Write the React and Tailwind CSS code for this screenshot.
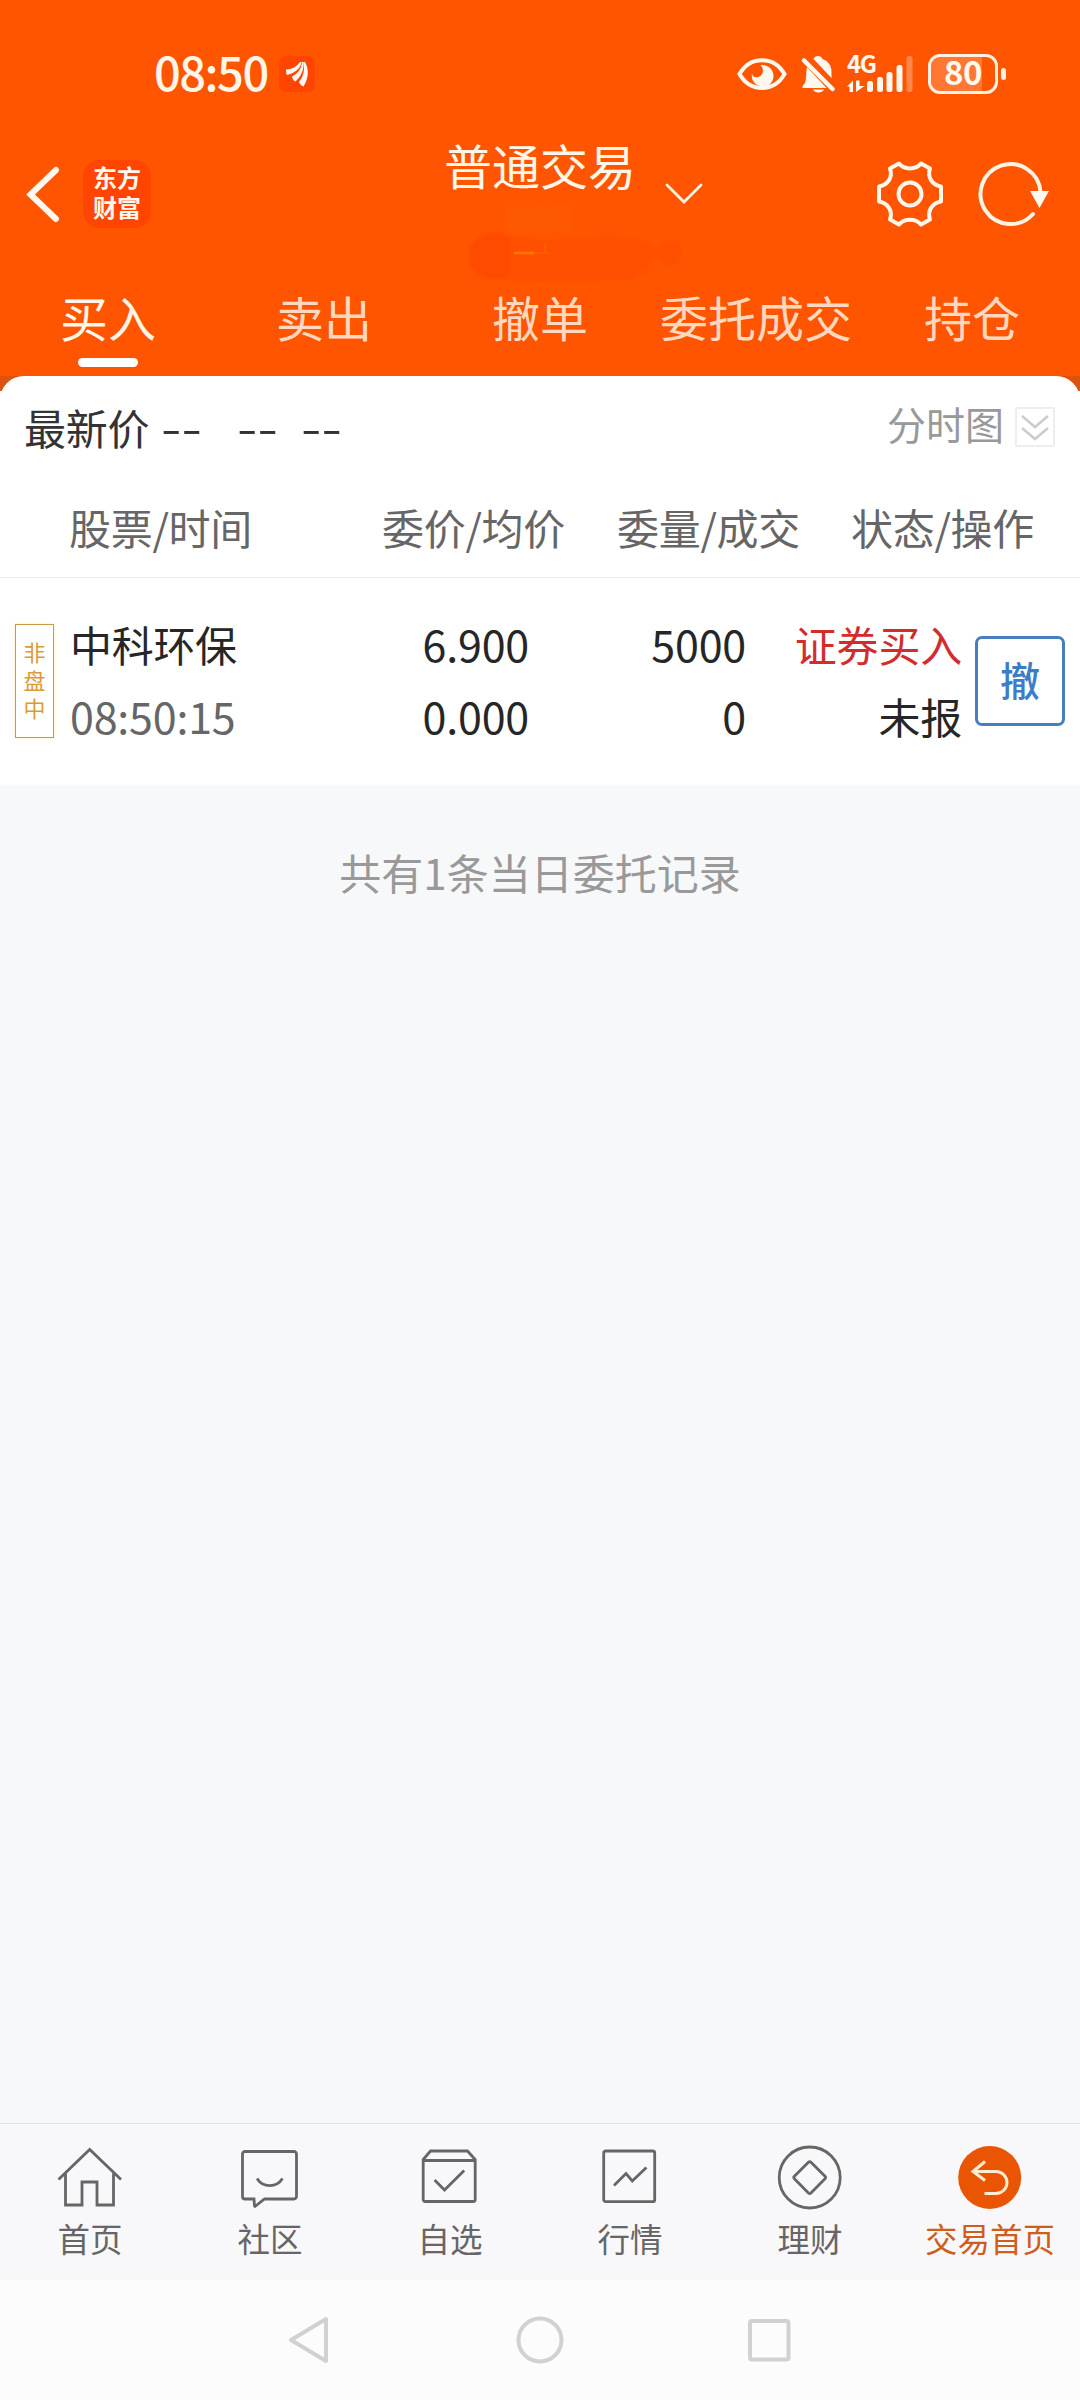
const tabs = ['买入', '卖出', '撤单', '委托成交', '持仓'];

function AppBadge() {
  return (
    <svg className="w-9 h-9 ml-[13px]" viewBox="0 0 36 36">
      <rect width="36" height="36" rx="7" fill="#ff4500" />
      <g fill="#fffaf2">
        <path d="M7 13.500c6 0 11-3 14-7.500h1.500c-1 7-7.500 11.500-14.500 13-.8-1-1-3.500-1-5.500z" />
        <path d="M13 20.500c6-3 9.500-8 10-14.500h1.500c1 8-3.500 15.500-8 19.500-2-.5-3-3-3.500-5z" />
        <path d="M20 26c4.500-6 6-12 4.500-20h1.500c4 7 4 16-1.500 24.500-2-.7-3.800-2.500-4.500-4.500z" />
      </g>
    </svg>
  );
}

function StatusBar() {
  return (
    <div className="h-[148px] pb-px flex items-center pl-[154px] pr-[74px]">
      <span className="mt-[-7px] text-[47px] font-medium leading-none tracking-[-1.500px] text-[#fff6e8] w-[112px] whitespace-nowrap">
        08:50
      </span>
      <AppBadge />
      <div className="ml-auto flex items-center">
        <svg className="w-[50px] h-[36px]" viewBox="0 0 50 36">
          <path d="M2.500 18C13-.5 37-.5 47.500 18 37 36.500 13 36.500 2.500 18z" fill="none" stroke="#fff8ee" strokeWidth="4" />
          <path d="M15 17c0 3.500 3 5 6.500 4 5-1.500 6-8 2-12 8-.5 13 4.500 13 11 0 5.500-4 10.500-10.500 10.500S13.500 25 15 17z" fill="#fff8ee" />
        </svg>
        <svg className="w-[34px] h-[38px] ml-[14px]" viewBox="0 0 34 38" fill="#fff8ee">
          <path d="M12.500 4C13.500 0 20.500 0 21.500 4c6 2 9 7 9 13v6z" />
          <path d="M6 12c-1 4-.5 12-2 16l-2.500 3v2h24z" />
          <path d="M12 34.500h11c-1.500 4-9.500 4-11 0z" />
          <path d="M3 5.500 31.500 34" fill="none" stroke="#fff8ee" strokeWidth="4.500" strokeLinecap="round" />
        </svg>
        <div className="relative w-[67px] h-[38px] ml-[12px]">
          <span className="absolute left-0 top-[-4px] text-[24px] leading-[24px] font-bold tracking-[-1.500px] text-[#fff8ee]">4G</span>
          <svg className="absolute inset-0 w-full h-full" viewBox="0 0 67 38" fill="#fff8ee">
            <path d="M0 31.500 6 25.500V37H2.500v-5.500zM9 25.500h3.500V31H17.500L9 37z" />
            <rect x="20" y="26" width="6" height="11" rx="2.500" />
            <rect x="30" y="22" width="6" height="15" rx="2.500" />
            <rect x="39.500" y="17" width="6" height="20" rx="2.500" />
            <rect x="49.500" y="10" width="6" height="27" rx="2.500" />
            <rect x="59.500" y="1" width="6" height="36" rx="2.500" opacity="0.300" />
          </svg>
        </div>
        <div className="relative ml-[14px] w-[70px] h-10 rounded-[12px] border-[3px] border-[#fff0e0] flex items-center justify-center">
          <div className="absolute left-0 inset-y-0 w-[51px] rounded-l-[9px] bg-white/20" />
          <span className="relative mt-[-5px] text-[33px] leading-[34px] font-bold tracking-[-0.500px] text-[#fff8ee]">80</span>
        </div>
        <div className="ml-[3px] w-[5px] h-3 rounded-full bg-[#fff0e0]" />
      </div>
    </div>
  );
}

function Header() {
  return (
    <div className="h-[126px] flex items-start">
      <svg className="w-[34px] h-[58px] ml-[26px] mt-[17px]" viewBox="0 0 34 58" fill="none" stroke="#fff8ee" strokeWidth="6" strokeLinecap="round">
        <path d="M30 5 4.500 29.500 30 54" />
      </svg>
      <div className="ml-[23px] mt-[12px] w-[68px] h-[68px] pb-1 rounded-[16px] bg-[#ff4500] text-[#fff8ee] text-[24px] leading-[30px] font-bold flex flex-col items-center justify-center">
        <div>东方</div>
        <div>财富</div>
      </div>
      <div className="relative w-[192px] ml-[293px] mt-[-12px]">
        <div className="text-[48px] leading-[56px] whitespace-nowrap text-[#fff6e8]">普通交易</div>
        {/* smudged account number */}
        <svg className="absolute left-[24px] top-[64px] w-[216px] h-[84px]" viewBox="0 0 216 84">
          <defs>
            <filter id="soft" x="-20%" y="-20%" width="140%" height="140%">
              <feGaussianBlur stdDeviation="1.500" />
            </filter>
          </defs>
          <g filter="url(#soft)">
            <path d="M1 52C2 36 24 32 38 33 60 40 84 42 100 39 130 36 160 36 178 41c8 4 8 8 12 8 6-8 16-12 22-6 3 10 0 22-8 24-8-2-12-10-18-10-6 6-6 18-22 22-50 4-100 4-140 0C2 76 0 66 1 52z" fill="#ff5000" />
            <path d="M1 52C4 34 24 30 42 34v42C20 84-2 76 1 52z" fill="#ff4c00" />
            <path d="M38 8 104 6v24l-66 6z" fill="#ff5a00" opacity="0.600" />
          </g>
          <path d="M46 53h20" stroke="#ff8200" strokeWidth="2.500" opacity="0.800" />
          <path d="M66 53h14M77 43v11" stroke="#ff6c00" strokeWidth="1.500" opacity="0.600" />
        </svg>
      </div>
      <svg className="w-[38px] h-[24px] ml-[29px] mt-[34px]" viewBox="0 0 38 24" fill="none" stroke="#fff3e4" strokeWidth="2.800" strokeLinecap="round">
        <path d="M2 3 19 20 36 3" />
      </svg>
      <svg className="w-[68px] h-[68px] ml-[173px] mt-[12px]" viewBox="-34 -34 68 68" fill="none" stroke="#fff6ec" strokeWidth="4" strokeLinejoin="round">
        <path d="M-11-30.500C-6-24 6-24 11-30.500L20-25.500C17-17 22-9 31-7.500V7.500C22 9 17 17 20 25.500L11 30.500C6 24-6 24-11 30.500L-20 25.500C-17 17-22 9-31 7.500V-7.500C-22-9-17-17-20-25.500z" />
        <circle r="11.500" />
      </svg>
      <svg className="w-[74px] h-[68px] ml-[34px] mt-[12px]" viewBox="0 0 74 68">
        <path d="M55 54A30 30 0 1 1 62.500 32" fill="none" stroke="#fff3e4" strokeWidth="4" strokeLinecap="round" />
        <path d="M52 31h19L61.500 48z" fill="#fffaf2" />
      </svg>
    </div>
  );
}

function Tabs() {
  return (
    <div className="h-[102px] grid grid-cols-5">
      {tabs.map((tab, i) => (
        <div key={tab} className="flex flex-col items-center pt-[14px]">
          <span className={`text-[48px] leading-[56px] whitespace-nowrap ${i === 0 ? 'text-[#fff6e8]' : 'text-[#ffd8bf]'}`}>
            {tab}
          </span>
          {i === 0 && <span className="mt-[14px] w-[60px] h-[9px] rounded-full bg-white" />}
        </div>
      ))}
    </div>
  );
}

function Dashes({ className }) {
  return <span className={`inline-block origin-left scale-x-140 ${className}`}>--</span>;
}

function PriceRow() {
  return (
    <div className="h-[106px] pt-[23px] pl-[24px] pr-[25px] flex items-start text-[42px] leading-[56px] text-[#333]">
      <span className="tracking-[-0.200px]">最新价</span>
      <Dashes className="ml-[12px] mt-[-1px] w-[76px]" />
      <Dashes className="mt-[-1px] w-[64px]" />
      <Dashes className="mt-[-1px]" />
      <div className="ml-auto mt-[3px] flex items-center text-[39px] leading-[50px] text-[#999]">
        <span className="mt-[-4px]">分时图</span>
        <div className="ml-[11px] mt-[4px] w-10 h-10 rounded-[2px] border-2 border-[#eee]">
          <svg className="w-9 h-9" viewBox="0 0 36 36" fill="none" stroke="#ccc" strokeWidth="2.500">
            <path d="M5 7 18 18 31 7M5 19 18 30 31 19" />
          </svg>
        </div>
      </div>
    </div>
  );
}

function OrderTable() {
  return (
    <>
      <div className="h-[96px] border-b border-[#ededed] flex pt-[17px] text-[42px] leading-[56px] tracking-[-0.300px] text-[#666] whitespace-nowrap">
        <span className="w-[314px] pl-[69px]">股票/时间</span>
        <span className="w-[235px] pl-[68px]">委价/均价</span>
        <span className="w-[235px] pl-[68px]">委量/成交</span>
        <span className="pl-[67px]">状态/操作</span>
      </div>
      <div className="h-[207px] flex pt-[30px] text-[42px] leading-[72px] text-[#262626] whitespace-nowrap">
        <div className="ml-[15px] mt-[16px] w-[39px] h-[114px] pb-1 border border-[#c99a4a] shadow-[0_0_3px_#ffe9a8] flex flex-col items-center justify-center text-[22px] leading-[28px] text-[#dc9a35]">
          <div>非</div>
          <div>盘</div>
          <div>中</div>
        </div>
        <div className="ml-[16px] w-[230px]">
          <div className="tracking-[-0.300px]">中科环保</div>
          <div className="mt-[-1px] text-[43px] tracking-[-0.200px] text-[#666]">08:50:15</div>
        </div>
        <div className="w-[229px] mt-[-1px] text-right text-[43px] tracking-[-0.200px]">
          <div>6.900</div>
          <div>0.000</div>
        </div>
        <div className="w-[217px] mt-[-1px] text-right text-[43px] tracking-[-0.200px]">
          <div>5000</div>
          <div>0</div>
        </div>
        <div className="w-[216px] text-right tracking-[-0.200px]">
          <div className="text-[#d22d2d]">证券买入</div>
          <div>未报</div>
        </div>
        <button className="ml-[13px] mt-[28px] w-[90px] h-[90px] pb-[4px] rounded-[7px] border-[3px] border-[#457fc0] text-[40px] leading-none font-medium text-[#3d7cc9] flex items-center justify-center">
          撤
        </button>
      </div>
    </>
  );
}

const navItems = [
  {
    label: '首页',
    icon: <path d="M1.500 34.500 32.700 4.500 64 34.500M8.500 28.500V60H25V37H40V60H56.500V28.500" />,
  },
  {
    label: '社区',
    icon: (
      <>
        <path d="M17 54H8a2.500 2.500 0 0 1-2.500-2.500V9A2.500 2.500 0 0 1 8 6.500H57A2.500 2.500 0 0 1 59.500 9V51.500A2.500 2.500 0 0 1 57 54H27.500L18 61.500 17.500 61z" />
        <path d="M20 33.500C26 43 39.500 43 45.500 33.500" />
      </>
    ),
  },
  {
    label: '自选',
    icon: (
      <>
        <path d="M6.200 14.500 13.500 6H50.500L58.200 14.500V54.500a2 2 0 0 1-2 2H8.200a2 2 0 0 1-2-2zM6.200 15.500H58" />
        <path d="M17.600 35 27.500 45 47.200 25.500" />
      </>
    ),
  },
  {
    label: '行情',
    icon: (
      <>
        <rect x="6.700" y="6" width="51" height="50.700" rx="2" />
        <path d="M17 40.500 29 28.500 35.300 36 49.400 22.500" />
      </>
    ),
  },
  {
    label: '理财',
    icon: (
      <>
        <circle cx="32.700" cy="32.500" r="30.500" />
        <path d="M34 17.300 48 31.300Q49.200 32.500 48 33.700L34 48Q32.700 49.200 31.400 48L17.400 33.700Q16.200 32.500 17.400 31.300L31.400 17.300Q32.700 16 34 17.300z" />
      </>
    ),
  },
  {
    label: '交易首页',
    active: true,
    icon: (
      <>
        <circle cx="32.700" cy="32.500" r="31.500" fill="#ea5504" stroke="none" />
        <path d="M28 16.500 16 26.500 28 35.500M16 26.500H39A11 11 0 0 1 39 48.500H27.500" stroke="#ffecd2" strokeWidth="3" />
      </>
    ),
  },
];

function BottomNav() {
  return (
    <div className="h-[157px] border-t border-[#dedfe1] bg-[#f8f8fa] grid grid-cols-6">
      {navItems.map(({ label, icon, active }) => (
        <div key={label} className="flex flex-col items-center pt-[21px]">
          <svg className="w-[66px] h-[66px]" viewBox="0 0 66 66" fill="none" stroke="#666" strokeWidth="2.800">
            {icon}
          </svg>
          <span className={`mt-[7px] text-[32.500px] leading-[40px] whitespace-nowrap ${active ? 'text-[#cf5d1c]' : 'text-[#666]'}`}>
            {label}
          </span>
        </div>
      ))}
    </div>
  );
}

function SystemNav() {
  return (
    <div className="h-[120px] bg-[#fcfcfc] flex justify-center items-center gap-[182px]">
      <svg className="w-12 h-12" viewBox="0 0 48 48" fill="none" stroke="#d1d1d1" strokeWidth="4" strokeLinejoin="round">
        <path d="M40 3V45L5 24z" />
      </svg>
      <svg className="w-12 h-12" viewBox="0 0 48 48" fill="none" stroke="#d1d1d1" strokeWidth="4">
        <circle cx="24" cy="24" r="21.500" />
      </svg>
      <svg className="w-12 h-12" viewBox="0 0 48 48" fill="none" stroke="#d1d1d1" strokeWidth="4">
        <rect x="4" y="5" width="38.500" height="38.500" rx="2" />
      </svg>
    </div>
  );
}

export default function App() {
  return (
    <div className="w-[1080px] h-[2400px] flex flex-col overflow-hidden bg-[#f7f8fa] font-['Noto_Sans_CJK_SC',sans-serif]">
      <div className="bg-[#ff5500]">
        <StatusBar />
        <Header />
        <Tabs />
      </div>
      <div className="bg-[linear-gradient(#dc5310_15px,#fff_15px)]">
        <div className="bg-white rounded-t-[24px]">
          <PriceRow />
          <OrderTable />
        </div>
      </div>
      <div className="flex-1 pt-[59px] text-center text-[42px] leading-[56px] text-[#999]">
        共有1条当日委托记录
      </div>
      <BottomNav />
      <SystemNav />
    </div>
  );
}
